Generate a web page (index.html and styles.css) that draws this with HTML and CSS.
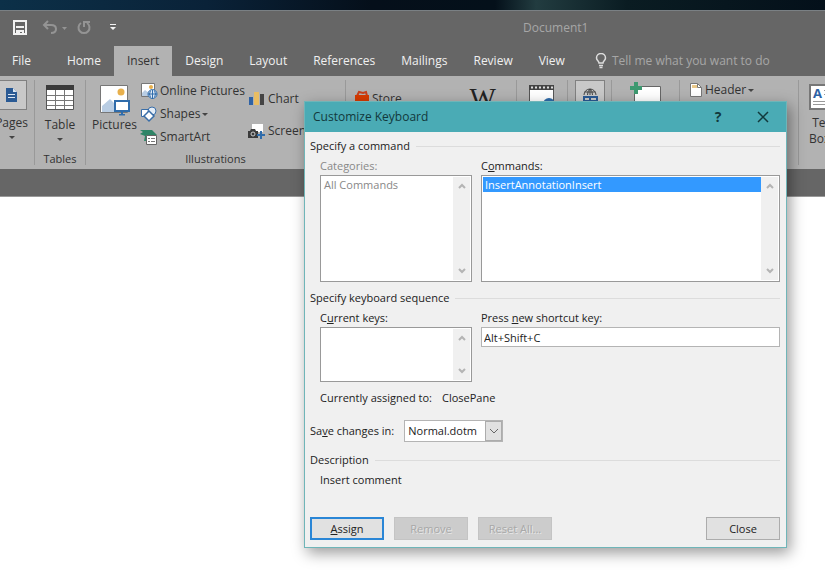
FILE: index.html
```html
<!DOCTYPE html>
<html lang="en">
<head>
    <meta charset="utf-8">
    <title>Document1</title>
    <link rel="stylesheet" href="styles.css">
</head>
<body>
    <div class="desktop"></div>

    <header class="titlebar">
        <div class="quick-access">
            <button class="qa-btn" aria-label="Save">
                <svg width="16" height="16" viewBox="0 0 16 16"><path fill="none" stroke="#f2f2f2" stroke-width="2" d="M2 1v13h12V1zM4 7h8"/><path fill="#f2f2f2" d="M2 1h12v1H2zM4 10h8v4h-2v-2H8v2H4z"/></svg>
            </button>
            <button class="qa-btn undo" aria-label="Undo">
                <svg width="26" height="16" viewBox="0 0 26 16"><path fill="none" stroke="#949494" stroke-width="2" d="M6 1L2 5l4 4M2 5h7c4 0 5 2 5 4s-1 4-5 4"/><path fill="#949494" d="M20 7h5l-2.500 3z"/></svg>
            </button>
            <button class="qa-btn redo" aria-label="Repeat">
                <svg width="16" height="16" viewBox="0 0 16 16"><path fill="none" stroke="#949494" stroke-width="2" d="M5 3a5.500 5.500 0 1 0 6 0M8 7V2h6"/></svg>
            </button>
            <button class="qa-btn more" aria-label="Customize Quick Access Toolbar">
                <svg width="8" height="8" viewBox="0 0 8 8"><path fill="#f2f2f2" d="M1 0h6v1H1zM1 3h6L4 6z"/></svg>
            </button>
        </div>
        <div class="doc-title">Document1</div>
    </header>

    <nav class="tabs">
        <a href="#" class="tab file">File</a>
        <a href="#" class="tab">Home</a>
        <a href="#" class="tab active">Insert</a>
        <a href="#" class="tab">Design</a>
        <a href="#" class="tab">Layout</a>
        <a href="#" class="tab">References</a>
        <a href="#" class="tab">Mailings</a>
        <a href="#" class="tab">Review</a>
        <a href="#" class="tab">View</a>
        <a href="#" class="tell-me">
            <svg width="12" height="16" viewBox="0 0 12 16"><path fill="none" stroke="#dcdcdc" stroke-width="1.500" d="M4 10c0-2-2.500-2.500-2.500-5a4.500 4.500 0 0 1 9 0c0 2.500-2.500 3-2.500 5zM4 12.500h4M4.500 14.500h3"/></svg>
            Tell me what you want to do
        </a>
    </nav>

    <main class="ribbon">
        <section class="group pages">
            <button class="big">
                <span class="tile"><svg width="18" height="18" viewBox="0 0 18 18"><path fill="#2a5a94" d="M3 2h7l4 4v10H3z"/><path fill="#dce6f2" d="M10 2l4 4h-4zM5 8h7v1H5zM5 11h7v1H5z"/></svg></span>
                Pages
                <i class="caret"></i>
            </button>
        </section>

        <section class="group tables">
            <button class="big">
                <svg width="30" height="28" viewBox="0 0 30 28"><path fill="#fff" stroke="#555" d="M1.500 1.500h27v24h-27z"/><path fill="#3b3b3b" d="M1 1h28v5H1z"/><path fill="none" stroke="#777" d="M2 11.500h26M2 16.500h26M2 21.500h26M10.500 6v19M19.500 6v19"/></svg>
                Table
                <i class="caret"></i>
            </button>
            <h3 class="group-name">Tables</h3>
        </section>

        <section class="group illustrations">
            <div class="group-row">
                <button class="big pictures">
                    <svg width="30" height="32" viewBox="0 0 30 32"><path fill="#fff" stroke="#777" d="M.500 1.500h27v27H.500z"/><circle cx="21" cy="8" r="3.500" fill="#e8b04c"/><path fill="#b9cde3" d="M2 28v-6l8-7 6 6v7z"/><path fill="#fff" stroke="#2f6cab" stroke-width="2" d="M15 17h14v10H15z"/><path fill="#2f6cab" d="M19 30h6v1.500h-6zM21 28h2v2h-2z"/></svg>
                    Pictures
                </button>
                <div class="stack">
                    <button class="small">
                        <svg width="18" height="18" viewBox="0 0 18 18"><path fill="#fff" stroke="#777" d="M1.500 1.500h13v13h-13z"/><circle cx="11" cy="5" r="2" fill="#e8b04c"/><path fill="#b9cde3" d="M2 14v-3l3-3 4 3v3z"/><circle cx="12.500" cy="12" r="4.500" fill="#dfe9f5" stroke="#2f6cab"/><path fill="none" stroke="#2f6cab" d="M8 12h9M12.500 8v9M10.500 8.500q-2 3.500 0 7M14.500 8.500q2 3.500 0 7"/></svg>
                        Online Pictures
                    </button>
                    <button class="small">
                        <svg width="18" height="18" viewBox="0 0 18 18"><path fill="#fff" stroke="#3a6ea8" d="M1.500 4.500h8v7h-8z"/><circle cx="12" cy="6" r="4" fill="#e4edf7" stroke="#3a6ea8"/><path fill="#fff" stroke="#3a6ea8" stroke-width="1.500" d="M9 6l5 5-5 5-5-5z"/></svg>
                        Shapes <i class="caret"></i>
                    </button>
                    <button class="small">
                        <svg width="18" height="18" viewBox="0 0 18 18"><path fill="#2f8567" d="M0 2h12l5 5-3 1H7v5H4L5 8 0 6l3-2z"/><path fill="#fff" stroke="#666" d="M6.500 7.500h10v9h-10z"/><path stroke="#777" d="M8 10.500h2M11 10.500h4M8 13.500h2M11 13.500h4"/></svg>
                        SmartArt
                    </button>
                </div>
                <div class="stack wide">
                    <button class="small">
                        <svg width="18" height="18" viewBox="0 0 18 18"><path fill="#2f62a5" d="M1 7h4v8H1z"/><path fill="#e9bd63" d="M6 2h5v13H6z"/><path fill="#444" d="M12 4h4v11h-4z"/></svg>
                        Chart
                    </button>
                    <button class="small">
                        <svg width="18" height="18" viewBox="0 0 18 18"><path fill="#fff" d="M4 2h11v8H4z"/><path fill="#3b3b3b" d="M0 9h2l1-2h4l1 2h2v7H0z"/><circle cx="5" cy="12" r="2" fill="none" stroke="#ccc"/><path fill="#2f6cab" d="M12 9h2v3h3v2h-3v3h-2v-3H9v-2h3z"/></svg>
                        Screenshot
                    </button>
                </div>
            </div>
            <h3 class="group-name">Illustrations</h3>
        </section>

        <section class="group addins">
            <button class="small">
                <svg width="16" height="18" viewBox="0 0 16 18"><path fill="none" stroke="#c8401c" stroke-width="2" d="M3 6l2-4 4 1 3-1 1 4"/><path fill="#d83b01" d="M1 5h14v11H1z"/></svg>
                Store
            </button>
            <button class="wiki" aria-label="Wikipedia">W</button>
        </section>

        <section class="group media">
            <button class="big" aria-label="Online Video">
                <svg width="26" height="28" viewBox="0 0 26 28"><path fill="#fff" stroke="#555" d="M.500 1.500h24v24H.500z"/><path fill="#444" d="M0 1h25v5H0z"/><path stroke="#ddd" stroke-width="2" stroke-dasharray="2 2" d="M2 3.500h22"/><circle cx="20" cy="20" r="6" fill="#2f6cab"/></svg>
            </button>
        </section>

        <section class="group links">
            <button class="big" aria-label="Links">
                <span class="tile"><svg width="20" height="22" viewBox="0 0 20 22"><path fill="none" stroke="#444" d="M4 11a6 6 0 0 1 12 0M4.500 8h11M10 5v6M7.500 11q0-4 2.500-6 2.500 2 2.500 6"/><path fill="none" stroke="#2a5a94" stroke-width="2" d="M4 13h6v4H4zM10 13h7v4h-7z"/></svg></span>
            </button>
        </section>

        <section class="group comments">
            <button class="big" aria-label="Comment">
                <svg width="32" height="28" viewBox="0 0 32 28"><path fill="#fff" stroke="#666" d="M4.500 4.500h26v18h-26z"/><path fill="#3d9970" d="M4 0h4v4h4v4H8v4H4V8H0V4h4z"/></svg>
            </button>
        </section>

        <section class="group header-footer">
            <button class="small">
                <svg width="14" height="16" viewBox="0 0 14 16"><path fill="#fff" stroke="#777" d="M1.500 1.500h7l4 4v9h-11z"/><path fill="#e9c88a" d="M3 3h5v3H3z"/><path fill="none" stroke="#777" d="M8.500 1.500v4h4"/></svg>
                Header <i class="caret"></i>
            </button>
        </section>

        <section class="group text">
            <button class="big">
                <svg width="30" height="26" viewBox="0 0 30 26"><path fill="#fff" stroke="#777" stroke-width="2" d="M1 1h28v24H1z"/><path stroke="#999" d="M15 6.500h12M15 10.500h12M4 17.500h22M4 20.500h22"/><text x="4" y="14" class="icon-letter">A</text></svg>
                <span>Text<br>Box <i class="caret"></i></span>
            </button>
        </section>
    </main>

    <div class="band"></div>

    <form class="dialog" role="dialog" aria-labelledby="dialog-title">
        <div class="dialog-bar">
            <h2 id="dialog-title">Customize Keyboard</h2>
            <button type="button" class="bar-btn">?</button>
            <button type="button" class="bar-btn" aria-label="Close window">
                <svg width="12" height="12" viewBox="0 0 12 12"><path stroke="#12393c" stroke-width="1.500" d="M1 1l10 10M11 1L1 11"/></svg>
            </button>
        </div>

        <div class="dialog-body">
            <h4 class="section">Specify a command</h4>
            <div class="columns">
                <div class="field">
                    <label for="categories" class="dim">Categories:</label>
                    <div class="listbox tall">
                        <select id="categories" size="6" disabled><option>All Commands</option></select>
                        <div class="scroll">
                            <svg width="8" height="6" viewBox="0 0 8 6"><path d="M1 5l3-3 3 3"/></svg>
                            <svg width="8" height="6" viewBox="0 0 8 6"><path d="M1 1l3 3 3-3"/></svg>
                        </div>
                    </div>
                </div>
                <div class="field">
                    <label for="commands">C<u>o</u>mmands:</label>
                    <div class="listbox tall">
                        <select id="commands" size="6"><option selected>InsertAnnotationInsert</option></select>
                        <div class="scroll">
                            <svg width="8" height="6" viewBox="0 0 8 6"><path d="M1 5l3-3 3 3"/></svg>
                            <svg width="8" height="6" viewBox="0 0 8 6"><path d="M1 1l3 3 3-3"/></svg>
                        </div>
                    </div>
                </div>
            </div>

            <h4 class="section">Specify keyboard sequence</h4>
            <div class="columns">
                <div class="field">
                    <label for="keys">C<u>u</u>rrent keys:</label>
                    <div class="listbox">
                        <select id="keys" size="3"></select>
                        <div class="scroll">
                            <svg width="8" height="6" viewBox="0 0 8 6"><path d="M1 5l3-3 3 3"/></svg>
                            <svg width="8" height="6" viewBox="0 0 8 6"><path d="M1 1l3 3 3-3"/></svg>
                        </div>
                    </div>
                </div>
                <div class="field">
                    <label for="shortcut">Press <u>n</u>ew shortcut key:</label>
                    <input id="shortcut" type="text" value="Alt+Shift+C">
                </div>
            </div>

            <p class="assigned"><span>Currently assigned to:</span><span>ClosePane</span></p>

            <div class="save-row">
                <label for="save-in">Sa<u>v</u>e changes in:</label>
                <div class="combo">
                    <select id="save-in"><option>Normal.dotm</option></select>
                    <span class="combo-arrow"><svg width="10" height="6" viewBox="0 0 10 6"><path d="M1 1l4 4 4-4"/></svg></span>
                </div>
            </div>

            <h4 class="section">Description</h4>
            <p class="description">Insert comment</p>

            <div class="buttons">
                <button type="button" class="default"><u>A</u>ssign</button>
                <button type="button" disabled>Remove</button>
                <button type="button" disabled>Reset All...</button>
                <button type="button" class="close">Close</button>
            </div>
        </div>
    </form>
</body>
</html>
```
FILE: styles.css
```css
* {
    box-sizing: border-box;
}
body {
    margin: 0;
    min-height: 100vh;
    overflow: hidden;
    background: #fff;
    font: 12px/16px "Open Sans", "Noto Sans", sans-serif;
    color: #333;
}
button, select, input {
    font: inherit;
    color: inherit;
    margin: 0;
}
button {
    padding: 0;
    border: none;
    background: none;
}
a {
    text-decoration: none;
}
h2, h3, h4, p {
    margin: 0;
    font-size: inherit;
    font-weight: normal;
}
svg {
    display: block;
    flex: none;
}

/* window chrome */
.desktop {
    height: 10px;
    background: linear-gradient(90deg, #0c3048, #0a2238 25%, #050f1a 45%, #04101a 60%, #223c40 65%, #0a1c22 76%, #04101a);
}
.titlebar {
    display: flex;
    align-items: center;
    height: 36px;
    padding-bottom: 2px;
    background: #666;
    border-top: 1px solid #7a8084;
}
.quick-access {
    display: flex;
    align-items: center;
    flex: 1;
    padding-left: 12px;
}
.undo {
    margin-left: 14px;
}
.redo {
    margin-left: 8px;
}
.more {
    margin-left: 17px;
}
.doc-title {
    width: 302px;
    color: #a6a6a6;
}
.tabs {
    display: flex;
    height: 30px;
    background: #666;
    white-space: nowrap;
}
.tab {
    padding: 7px 13px;
    color: #f0f0f0;
}
.tab.file {
    padding: 7px 23px 7px 12px;
}
.tab.active {
    background: #b2b2b2;
    color: #333;
}
.tell-me {
    display: flex;
    align-items: center;
    gap: 5px;
    padding-left: 17px;
    color: #a6a6a6;
}

/* ribbon */
.ribbon {
    display: flex;
    height: 93px;
    padding: 4px 0;
    background: #b2b2b2;
    overflow: hidden;
    white-space: nowrap;
}
.group {
    flex: none;
    display: flex;
    flex-direction: column;
    align-items: center;
    border-right: 1px solid #999;
}
.group-row {
    display: flex;
    flex: 1;
}
.group-name {
    margin-top: auto;
    line-height: 12px;
    font-size: 11px;
}
.big {
    display: flex;
    flex-direction: column;
    align-items: center;
    gap: 5px;
    padding-top: 4px;
}
.big.pictures {
    gap: 1px;
}
.small {
    display: flex;
    align-items: center;
    gap: 2px;
}
.caret {
    display: inline-block;
    border: 3px solid transparent;
    border-top-color: #444;
    border-bottom: none;
}
.tile {
    display: flex;
    align-items: center;
    justify-content: center;
    width: 30px;
    height: 30px;
    background: #c8c8c8;
    border: 1px solid #808080;
}
.pages {
    width: 35px;
    align-items: flex-end;
    padding-right: 6px;
}
.pages .big, .links .big {
    padding-top: 0;
}
.tables {
    width: 51px;
}
.illustrations {
    width: 260px;
}
.illustrations .group-row {
    align-self: stretch;
    padding-left: 6px;
}
.stack {
    display: flex;
    flex-direction: column;
    flex: none;
    width: 105px;
    gap: 5px;
    margin-left: 3px;
    padding-top: 2px;
}
.stack.wide {
    gap: 14px;
    padding-top: 10px;
}
.addins {
    width: 171px;
    flex-direction: row;
    align-items: flex-start;
    justify-content: space-between;
    padding: 10px 20px 0 8px;
}
.wiki {
    font: 28px/16px "Liberation Serif", serif;
    color: #222;
}
.media {
    width: 51px;
}
.links {
    width: 44px;
}
.comments {
    width: 68px;
}
.comments .big {
    padding-top: 2px;
}
.header-footer {
    width: 119px;
    align-items: flex-start;
    padding: 2px 0 0 9px;
}
.text {
    width: 60px;
    align-items: flex-start;
    padding-left: 10px;
    border: none;
}
.icon-letter {
    font: bold 13px "Open Sans", sans-serif;
    fill: #2f62a5;
}
.band {
    height: 28px;
    background: #666;
    border-bottom: 1px solid #999;
}

/* dialog */
.dialog {
    position: absolute;
    top: 101px;
    left: 304px;
    width: 483px;
    background: #f0f0f0;
    border: 1px solid #6fb5b8;
    box-shadow: 3px 5px 14px rgba(0, 0, 0, 0.4);
    font-size: 11px;
    color: #222;
}
.dialog-bar {
    display: flex;
    align-items: center;
    height: 30px;
    padding: 0 8px;
    background: #4aabb5;
    color: #12393c;
}
.dialog-bar h2 {
    flex: 1;
    font-size: 12px;
}
.bar-btn {
    display: flex;
    justify-content: center;
    width: 30px;
    font-size: 14px;
    font-weight: bold;
}
.bar-btn + .bar-btn {
    margin-left: 15px;
}
.dialog-body {
    padding: 6px 6px 7px 5px;
}
.section {
    display: flex;
    align-items: center;
    gap: 6px;
    margin-bottom: 4px;
}
.section::after {
    content: "";
    flex: 1;
    border-top: 1px solid #dcdcdc;
}
.columns {
    display: grid;
    grid-template-columns: 152px 1fr;
    gap: 9px;
    padding-left: 10px;
    margin-bottom: 8px;
}
.field label {
    display: block;
    margin-bottom: 1px;
}
.dim {
    color: #888;
}
.listbox {
    display: flex;
    height: 55px;
    padding: 1px;
    background: #fff;
    border: 1px solid #999;
}
.listbox.tall {
    height: 107px;
}
.listbox select {
    flex: 1;
    min-width: 0;
    padding: 0;
    border: none;
    border-radius: 0;
    outline: none;
    overflow: hidden;
    background: #fff;
    opacity: 1;
}
.listbox option {
    min-height: 13px;
    padding: 0 2px;
    border-radius: 0;
    line-height: 13px;
}
.listbox select:disabled option {
    color: #888;
}
#commands option:checked {
    background: #3399ff linear-gradient(#3399ff, #3399ff);
    color: #fff;
}
.scroll {
    display: flex;
    flex-direction: column;
    justify-content: space-between;
    align-items: center;
    width: 17px;
    padding: 6px 0;
    background: #f0f0f0;
}
.scroll path {
    fill: none;
    stroke: #b4b4b4;
    stroke-width: 2;
}
.field input {
    display: block;
    width: 100%;
    height: 20px;
    padding: 0 2px;
    border: 1px solid #b4b4b4;
    background: #fff;
}
.assigned {
    display: flex;
    gap: 10px;
    padding-left: 10px;
}
.save-row {
    display: flex;
    align-items: center;
    gap: 10px;
    margin: 14px 0 10px;
}
.combo {
    display: grid;
    width: 99px;
    height: 22px;
    border: 1px solid #b4b4b4;
}
.combo select {
    grid-area: 1 / 1;
    appearance: none;
    padding: 0 3px;
    border: none;
    border-radius: 0;
    background: #fff;
}
.combo-arrow {
    grid-area: 1 / 1;
    justify-self: end;
    display: flex;
    align-items: center;
    justify-content: center;
    width: 17px;
    background: #e1e1e1;
    border: 1px solid #acacac;
    pointer-events: none;
}
.combo-arrow path {
    fill: none;
    stroke: #666;
}
.description {
    padding-left: 10px;
}
.buttons {
    display: flex;
    gap: 10px;
    margin-top: 29px;
}
.buttons button {
    width: 74px;
    height: 23px;
    background: #e1e1e1;
    border: 1px solid #acacac;
}
.buttons .default {
    border: 2px solid #2a86d6;
}
.buttons button:disabled {
    background: #ccc;
    border-color: #c4c4c4;
    color: #a8a8a8;
    text-shadow: 1px 1px #e8e8e8;
}
.buttons .close {
    margin-left: auto;
}
```
